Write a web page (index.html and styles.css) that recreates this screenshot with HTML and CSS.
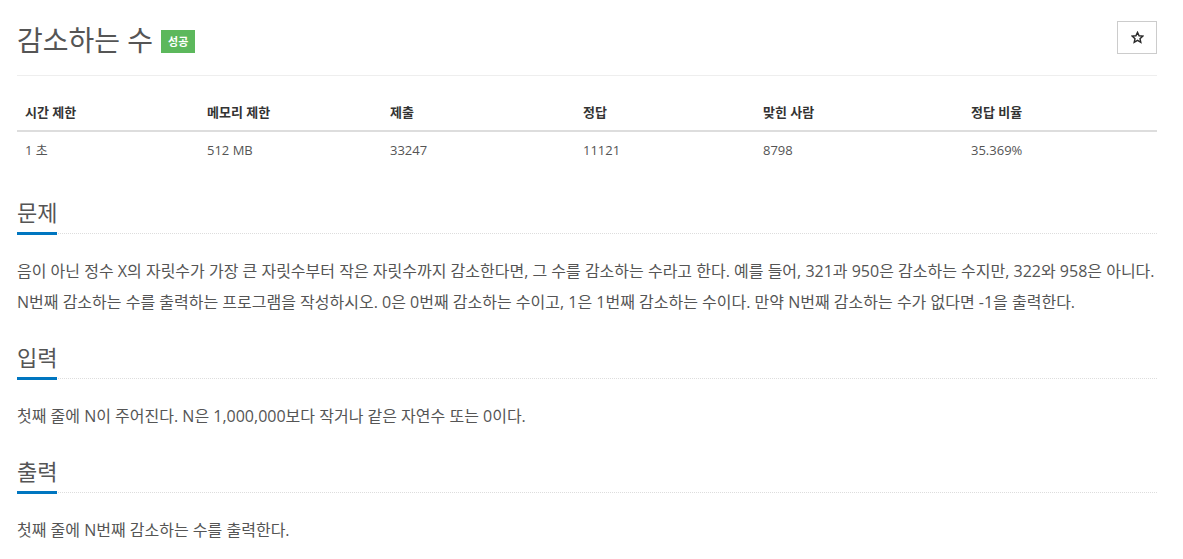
FILE: index.html
```html
<!DOCTYPE html>
<html lang="ko">
<head>
<meta charset="utf-8">
<title>감소하는 수</title>
<link rel="stylesheet" href="styles.css">
</head>
<body>
<div class="page">
  <div class="title-row">
    <div class="title-left">
      <h1 class="title">감소하는 수</h1>
      <span class="badge">성공</span>
    </div>
    <button class="star-btn" type="button" aria-label="즐겨찾기">
      <svg class="star" viewBox="0 0 24 24" width="13" height="13"><path d="M12 2.5l2.9 6.3 6.8.7-5.1 4.6 1.5 6.7L12 17.3l-6.1 3.5 1.5-6.7-5.1-4.6 6.8-.7z" fill="none" stroke="#2a2a2a" stroke-width="2.6" stroke-linejoin="miter"/></svg>
    </button>
  </div>
  <div class="title-rule"></div>

  <table class="info">
    <colgroup>
      <col class="c1"><col class="c2"><col class="c3"><col class="c4"><col class="c5"><col class="c6">
    </colgroup>
    <thead>
      <tr><th>시간 제한</th><th>메모리 제한</th><th>제출</th><th>정답</th><th>맞힌 사람</th><th>정답 비율</th></tr>
    </thead>
    <tbody>
      <tr><td>1 초</td><td>512 MB</td><td>33247</td><td>11121</td><td>8798</td><td>35.369%</td></tr>
    </tbody>
  </table>

  <section class="section first">
    <div class="headline"><h2>문제</h2></div>
    <p class="text">음이 아닌 정수 X의 자릿수가 가장 큰 자릿수부터 작은 자릿수까지 감소한다면, 그 수를 감소하는 수라고 한다. 예를 들어, 321과 950은 감소하는 수지만, 322와 958은 아니다. N번째 감소하는 수를 출력하는 프로그램을 작성하시오. 0은 0번째 감소하는 수이고, 1은 1번째 감소하는 수이다. 만약 N번째 감소하는 수가 없다면 -1을 출력한다.</p>
  </section>

  <section class="section">
    <div class="headline"><h2>입력</h2></div>
    <p class="text">첫째 줄에 N이 주어진다. N은 1,000,000보다 작거나 같은 자연수 또는 0이다.</p>
  </section>

  <section class="section">
    <div class="headline"><h2>출력</h2></div>
    <p class="text">첫째 줄에 N번째 감소하는 수를 출력한다.</p>
  </section>
</div>
</body>
</html>
```

FILE: styles.css
```css
* { box-sizing: border-box; }
html, body { margin: 0; padding: 0; background: #fff; }
body {
  font-family: "Open Sans", "Noto Sans CJK KR", sans-serif;
  color: #555;
}
.page {
  width: 1140px;
  margin-left: 17px;
  padding-top: 21px;
}
.title-row {
  display: flex;
  justify-content: space-between;
  align-items: flex-start;
  height: 33px;
}
.title-left {
  display: flex;
  align-items: center;
  height: 38px;
}
.title {
  margin: 0;
  font-size: 28px;
  font-weight: 400;
  line-height: 38px;
  color: #555;
}
.badge {
  display: inline-block;
  margin-left: 8px;
  margin-top: 2px;
  background: #5cb85c;
  color: #fff;
  font-size: 11px;
  font-weight: 700;
  line-height: 23px;
  height: 23px;
  padding: 0 7px;
}
.star-btn {
  display: flex;
  align-items: center;
  justify-content: center;
  width: 40px;
  height: 33px;
  border: 1px solid #ccc;
  background: #fff;
  padding: 0;
  margin: 0;
}
.star { display: block; }
.title-rule {
  margin-top: 21px;
  border-top: 1px solid #eee;
}
.info {
  width: 1140px;
  table-layout: fixed;
  border-collapse: collapse;
  margin-top: 18px;
  font-size: 13px;
}
.c1 { width: 182px; } .c2 { width: 183px; } .c3 { width: 193px; }
.c4 { width: 180px; } .c5 { width: 208px; } .c6 { width: 194px; }
.info th {
  text-align: left;
  font-weight: 700;
  color: #333;
  padding: 8px;
  line-height: 20px;
  border-bottom: 2px solid #ddd;
}
.info td {
  padding: 8px;
  line-height: 20px;
  color: #555;
}
.section { margin-top: 25px; }
.section.first { margin-top: 30px; }
.headline {
  border-bottom: 1px dotted #ddd;
}
.headline h2 {
  display: inline-block;
  margin: 0 0 -2px 0;
  font-size: 22px;
  font-weight: 400;
  line-height: 28px;
  padding-bottom: 6px;
  border-bottom: 3px solid #0076c0;
  color: #555;
}
.text {
  margin: 22px 0 0 0;
  font-size: 16px;
  line-height: 31px;
  color: #555;
}
```
